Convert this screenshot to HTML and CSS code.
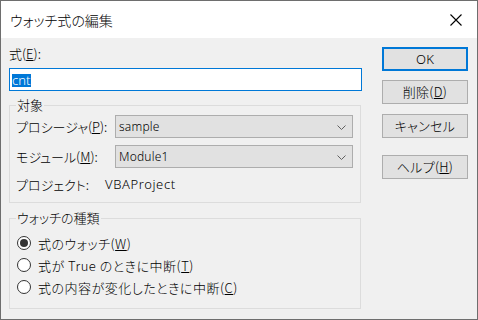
FILE: index.html
```html
<!DOCTYPE html>
<html lang="ja">
<head>
<meta charset="utf-8">
<link rel="stylesheet" href="styles.css">
</head>
<body>
<div class="window">
  <div class="titlebar">
    <span class="title">ウォッチ式の編集</span>
    <svg class="close" width="12" height="12" viewBox="0 0 12 12"><path d="M0.5 0.5 L11.5 11.5 M11.5 0.5 L0.5 11.5" stroke="#000" stroke-width="1.1" fill="none"/></svg>
  </div>
  <div class="body">
    <div class="main">
      <div class="exprlabel">式(<u>E</u>):</div>
      <div class="input"><span class="sel">cnt</span></div>
      <fieldset class="group g1">
        <legend>対象</legend>
        <div class="row">
          <span class="lbl">プロシージャ(<u>P</u>):</span>
          <div class="combo"><span class="val">sample</span><svg class="chev" width="9" height="5" viewBox="0 0 9 5"><path d="M0.5 0.5 L4.5 4.5 L8.5 0.5" stroke="#606060" stroke-width="1" fill="none"/></svg></div>
        </div>
        <div class="row">
          <span class="lbl">モジュール(<u>M</u>):</span>
          <div class="combo"><span class="val">Module1</span><svg class="chev" width="9" height="5" viewBox="0 0 9 5"><path d="M0.5 0.5 L4.5 4.5 L8.5 0.5" stroke="#606060" stroke-width="1" fill="none"/></svg></div>
        </div>
        <div class="row project">
          <span class="plbl">プロジェクト:</span>
          <span class="pval">VBAProject</span>
        </div>
      </fieldset>
      <fieldset class="group g2">
        <legend>ウォッチの種類</legend>
        <div class="radio"><span class="dot checked"></span><span class="rtext">式のウォッチ(<u>W</u>)</span></div>
        <div class="radio"><span class="dot"></span><span class="rtext">式が True のときに中断(<u>T</u>)</span></div>
        <div class="radio"><span class="dot"></span><span class="rtext">式の内容が変化したときに中断(<u>C</u>)</span></div>
      </fieldset>
    </div>
    <div class="buttons">
      <div class="btn default">OK</div>
      <div class="btn b2">削除(<u>D</u>)</div>
      <div class="btn b3">キャンセル</div>
      <div class="btn b4">ヘルプ(<u>H</u>)</div>
    </div>
  </div>
</div>
</body>
</html>
```
FILE: styles.css
```css
* { box-sizing: border-box; }
html, body { margin: 0; padding: 0; }
body {
  width: 478px;
  height: 320px;
  overflow: hidden;
  font-family: "Noto Sans CJK JP", "Noto Sans", sans-serif;
  font-size: 13px;
  font-weight: 300;
  font-feature-settings: "palt";
  color: #000;
}
.window {
  width: 478px;
  height: 320px;
  border: 1px solid #6e6e6e;
  background: #f0f0f0;
  display: flex;
  flex-direction: column;
}
.titlebar {
  height: 37px;
  background: #fff;
  display: flex;
  align-items: center;
  justify-content: space-between;
  padding: 0 15px 0 9px;
}
.title {
  font-size: 14px;
  line-height: 20px;
  padding-top: 1px;
}
.close { display: block; margin-top: 1px; }
.body {
  display: flex;
  padding: 9px 9px 0 8px;
}
.main {
  width: 353px;
}
.exprlabel {
  line-height: 14px;
  height: 14px;
  margin-bottom: 7px;
}
.input {
  height: 23px;
  border: 1px solid #0078d7;
  background: #fff;
  padding: 0 2px;
  display: flex;
  align-items: center;
}
.sel {
  background: #0078d7;
  color: #fff;
  font-family: "Noto Sans", sans-serif;
  font-weight: 300;
  font-size: 13px;
  line-height: 13px;
  height: 13px;
  padding: 0 1px 0 0;
  margin-top: 1px;
}
.group {
  margin: 0;
  border: 1px solid #dcdcdc;
  padding: 0 7px 0 6px;
  min-width: 0;
}
.group legend {
  padding: 0 1px;
  line-height: 16px;
  height: 16px;
}
.g1 { margin-top: 6px; padding-top: 2px; padding-bottom: 10px; width: 352px; }
.g2 { margin-top: 7px; padding-top: 6px; padding-bottom: 10px; width: 352px; }
.row {
  display: flex;
  align-items: center;
  height: 23px;
  margin-bottom: 7px;
}
.lbl { width: 99px; flex: none; }
.combo {
  width: 238px;
  height: 23px;
  background: #e1e1e1;
  border: 1px solid #adadad;
  display: flex;
  align-items: center;
  justify-content: space-between;
  padding: 0 6px 0 3px;
}
.val {
  font-family: "Noto Sans", sans-serif;
  font-weight: 300;
  font-size: 12px;
  letter-spacing: 0.2px;
}
.chev { display: block; margin-top: 1px; }
.row.project {
  height: 16px;
  margin-top: 8px;
  margin-bottom: 0;
}
.plbl { width: 89px; flex: none; }
.pval {
  font-family: "Noto Sans", sans-serif;
  font-weight: 300;
  font-size: 13px;
  letter-spacing: 0.6px;
}
.radio {
  display: flex;
  align-items: center;
  height: 22px;
  padding-left: 1px;
  gap: 7px;
}
.rtext { letter-spacing: 0.5px; }
.dot {
  width: 14px;
  height: 14px;
  border: 1px solid #333;
  border-radius: 50%;
  background: #fff;
  flex: none;
  display: flex;
  align-items: center;
  justify-content: center;
}
.dot.checked::after {
  content: "";
  width: 8px;
  height: 8px;
  border-radius: 50%;
  background: #333;
}
.buttons {
  margin-left: 20px;
  width: 86px;
  display: flex;
  flex-direction: column;
}
.btn {
  height: 24px;
  background: #e1e1e1;
  border: 1px solid #adadad;
  display: flex;
  align-items: center;
  justify-content: center;
  line-height: 14px;
  letter-spacing: 0.3px;
}
.btn.default {
  border: 2px solid #0078d7;
  font-family: "Noto Sans", sans-serif;
  font-weight: 300;
  font-size: 13px;
}
.b2 { margin-top: 9px; }
.b3 { margin-top: 10px; }
.b4 { margin-top: 17px; }
```
